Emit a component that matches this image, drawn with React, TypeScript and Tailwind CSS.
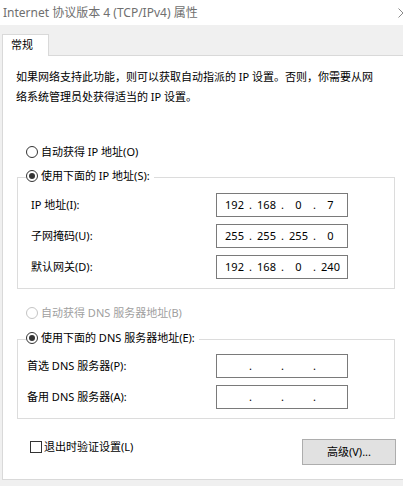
import React from "react";

const font = "font-['Noto_Sans','Noto_Sans_CJK_SC',sans-serif]";

function Radio({ checked, disabled, label }: { checked?: boolean; disabled?: boolean; label: string }) {
  return (
    <div className="flex items-center gap-[3px] leading-[20px]">
      <span
        className={`flex h-[12px] w-[12px] items-center justify-center rounded-full border bg-white ${
          disabled ? "border-[#c4c4c4]" : "border-[#333333]"
        }`}
      >
        {checked && <span className="h-[6px] w-[6px] rounded-full bg-[#333333]" />}
      </span>
      <span className={disabled ? "text-[#a0a0a0]" : "text-black"}>{label}</span>
    </div>
  );
}

function IpBox({ parts }: { parts: string[] }) {
  return (
    <div className="flex h-[24px] w-[132px] items-center border border-[#7a7a7a] bg-white pl-[5px]">
      {parts.map((p, i) => (
        <React.Fragment key={i}>
          <span className="w-[25px] text-center">{p}</span>
          {i < 3 && <span className="w-[7px] text-center">.</span>}
        </React.Fragment>
      ))}
    </div>
  );
}

function Row({ label, parts, labelWidth }: { label: string; parts: string[]; labelWidth: string }) {
  return (
    <div className="flex items-center">
      <span className={labelWidth}>{label}</span>
      <IpBox parts={parts} />
    </div>
  );
}

export default function App() {
  return (
    <div className={`flex h-[486px] w-[403px] flex-col overflow-hidden bg-[#f0f0f0] text-[11px] text-black ${font}`}>
      {/* title bar */}
      <div className="flex h-[25px] items-center justify-between bg-white pl-[3px]">
        <span className="text-[12px] text-[#6f6f6f]">Internet 协议版本 4 (TCP/IPv4) 属性</span>
        <svg width="10" height="10" viewBox="0 0 10 10" className="mr-[-5px]">
          <path d="M0.5 0.5 L9.5 9.5 M9.5 0.5 L0.5 9.5" stroke="#8a8a8a" strokeWidth="1" fill="none" />
        </svg>
      </div>

      {/* tab strip */}
      <div className="flex pl-[2px] pt-[9px]">
        <div className="relative z-10 -mb-px flex h-[22px] w-[47px] items-center border border-b-0 border-[#d9d9d9] bg-white pl-[8px]">
          常规
        </div>
      </div>

      {/* tab page */}
      <div className="mb-[6px] ml-[2px] flex flex-1 flex-col border border-r-0 border-[#d9d9d9] bg-white">
        <p className="ml-[13px] mt-[11px] leading-[20px]">
          如果网络支持此功能，则可以获取自动指派的 IP 设置。否则，你需要从网
          <br />
          络系统管理员处获得适当的 IP 设置。
        </p>

        <div className="ml-[23px] mt-[35px]">
          <Radio label="自动获得 IP 地址(O)" />
        </div>

        <fieldset className="ml-[14px] mt-[4px] w-[378px] border border-[#dcdcdc]">
          <legend className="ml-[8px] pb-[2px] pr-[4px]">
            <Radio checked label="使用下面的 IP 地址(S):" />
          </legend>
          <div className="flex flex-col gap-[7px] pb-[9px] pl-[13px] pt-[5px]">
            <Row labelWidth="w-[185px]" label="IP 地址(I):" parts={["192", "168", "0", "7"]} />
            <Row labelWidth="w-[185px]" label="子网掩码(U):" parts={["255", "255", "255", "0"]} />
            <Row labelWidth="w-[185px]" label="默认网关(D):" parts={["192", "168", "0", "240"]} />
          </div>
        </fieldset>

        <div className="ml-[23px] mt-[14px]">
          <Radio disabled label="自动获得 DNS 服务器地址(B)" />
        </div>

        <fieldset className="ml-[14px] mt-[5px] w-[378px] border border-[#dcdcdc]">
          <legend className="ml-[8px] pb-[2px] pr-[4px]">
            <Radio checked label="使用下面的 DNS 服务器地址(E):" />
          </legend>
          <div className="flex flex-col gap-[7px] pb-[9px] pl-[9px] pt-[4px]">
            <Row labelWidth="w-[189px]" label="首选 DNS 服务器(P):" parts={["", "", "", ""]} />
            <Row labelWidth="w-[189px]" label="备用 DNS 服务器(A):" parts={["", "", "", ""]} />
          </div>
        </fieldset>

        <div className="ml-[27px] mr-[7px] mt-[18px] flex items-start justify-between">
          <label className="flex items-center gap-[2px] leading-[20px]">
            <span className="h-[12px] w-[12px] border border-[#333333] bg-white" />
            退出时验证设置(L)
          </label>
          <button className="mt-[2px] h-[26px] w-[94px] border border-[#adadad] bg-[#e1e1e1] text-[11px]">
            高级(V)...
          </button>
        </div>
      </div>
    </div>
  );
}
